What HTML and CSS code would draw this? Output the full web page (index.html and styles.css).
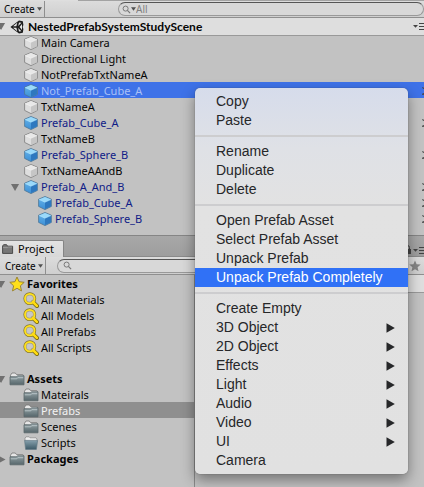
FILE: index.html
```html
<!DOCTYPE html>
<html lang="en">
<head>
<meta charset="utf-8">
<title>Scene editor</title>
<link rel="stylesheet" href="styles.css">
</head>
<body>
<svg class="defs" aria-hidden="true">
  <defs>
    <linearGradient id="gb" x1="0" y1="0" x2="0" y2="1"><stop offset="0" stop-color="#67b4ea"/><stop offset="1" stop-color="#3c8fd6"/></linearGradient>
    <linearGradient id="gf" x1="0" y1="0" x2="0" y2="1"><stop offset="0" stop-color="#93a1a5"/><stop offset="1" stop-color="#56666b"/></linearGradient>
    <linearGradient id="gs" x1="0" y1="0" x2="0" y2="1"><stop offset="0" stop-color="#86a0ac"/><stop offset="1" stop-color="#3d5a68"/></linearGradient>
    <symbol id="cube" viewBox="0 0 14 14">
      <path d="M7 .5 13.4 3.2V10.4L7 13.6.6 10.4V3.2z" fill="#dedede" stroke="#858585" stroke-width=".9"/>
      <path d="M7 1 13 3.4 7 6.2 1 3.4z" fill="#e8e8e8"/>
      <path d="M7 6.2 13 3.5V10.2L7 13.1z" fill="#c6c6c6"/>
      <path d="M1 3.5 7 6.2 13 3.5" fill="none" stroke="#f4f4f4" stroke-width=".6"/>
    </symbol>
    <symbol id="bluecube" viewBox="0 0 14 14">
      <path d="M7 .5 13.4 3.2V10.4L7 13.6.6 10.4V3.2z" fill="url(#gb)" stroke="#4c7594" stroke-width=".8"/>
      <path d="M7 1 13 3.4 7 6.2 1 3.4z" fill="#9ad9fa"/>
      <path d="M7 6.2 13 3.5V10.2L7 13.1z" fill="#2e78bf"/>
      <path d="M1 3.5 7 6.2 13 3.5" fill="none" stroke="#b3e5fc" stroke-width=".6"/>
    </symbol>
    <symbol id="folder" viewBox="0 0 16 14">
      <path d="M1.5 5V3.2L3 1H6.3L7.5 2.6H13.8L14.5 4V6z" fill="#e6e6e6" stroke="#747474" stroke-width=".8"/>
      <path d="M1 4.8H7.4L8.4 3.8H15V12.8H1z" fill="url(#gf)" stroke="#5b676b" stroke-width=".8"/>
      <path d="M1.8 6.8H7.8L8.8 5.7H14.2" fill="none" stroke="#c3cdd0" stroke-width=".8"/>
    </symbol>
    <symbol id="openfolder" viewBox="0 0 16 14">
      <path d="M2 5V2.2L3 .8H6L7 1.8H13L14 3V6z" fill="#eee" stroke="#8d8d8d" stroke-width=".8"/>
      <path d="M1.6 4.4H14.6L13.4 13.4H2.6z" fill="url(#gs)" stroke="#647b86" stroke-width=".7"/>
    </symbol>
    <symbol id="search" viewBox="0 0 16 16">
      <path d="M9.8 9.8 14 14" stroke="#77680f" stroke-width="4" stroke-linecap="round"/>
      <circle cx="6.8" cy="6.6" r="4.8" fill="none" stroke="#86772a" stroke-width="3.2"/>
      <circle cx="6.8" cy="6.6" r="4.8" fill="#ccc" fill-opacity=".5" stroke="#ffe11c" stroke-width="1.8"/>
      <path d="M10 10 13.9 13.9" stroke="#ffdc12" stroke-width="2.6" stroke-linecap="round"/>
    </symbol>
    <symbol id="lens" viewBox="0 0 10 10">
      <circle cx="4" cy="4" r="2.8" fill="none" stroke="#777" stroke-width="1.1"/><path d="M6 6 9 9" stroke="#777" stroke-width="1.4"/>
    </symbol>
    <symbol id="caret" viewBox="0 0 5 4"><path d="M0 .3H5L2.5 3.8z" fill="#505050"/></symbol>
    <symbol id="down" viewBox="0 0 10 10"><path d="M0 1H9L4.5 9z" fill="#707070"/></symbol>
    <symbol id="right" viewBox="0 0 10 10"><path d="M1 .5V9.5L9.5 5z" fill="#707070"/></symbol>
    <symbol id="pane" viewBox="0 0 11 7"><path d="M0 2H5L2.5 4.8z" fill="#444"/><path d="M6 .5H11M6 3.5H11M6 6.5H11" stroke="#444"/></symbol>
    <symbol id="chev" viewBox="0 0 2 10"><path d="M0 1H1L2 2V3H1zM0 8 1 7H2V9H0z" fill="#444" fill-opacity=".8"/></symbol>
    <symbol id="play" viewBox="0 0 9 10"><path d="M.5.3V9.7L8.8 5z" fill="#262729"/></symbol>
  </defs>
</svg>

<main class="editor">
  <section class="hierarchy">
    <div class="strip"></div>
    <div class="toolbar">
      <button class="create">Create<svg class="caret"><use href="#caret"/></svg></button>
      <label class="field field-top"><svg class="lens"><use href="#lens"/></svg><svg class="caret"><use href="#caret"/></svg><input type="text" placeholder="All" aria-label="Search hierarchy"></label>
    </div>
    <header class="scene">
      <svg class="fold"><use href="#down"/></svg>
      <svg class="unity" viewBox="0 0 14 14">
        <path d="M.4 7 9 .6 12.8 1.2 13.4 5 12.6 7 13.4 9 12.8 12.8 9 13.4z" fill="#1c1c1c"/>
        <path d="M3 6.2 7.2 2.8 6.4 6.2zM3 7.8 7.2 11.2 6.4 7.8zM9 2.6 11.4 2.8 8.2 6zM9 11.4 11.4 11.2 8.2 8zM12 4 12 10 9.6 7z" fill="#e6e6e6"/>
      </svg>
      <h1>NestedPrefabSystemStudyScene</h1>
      <svg class="pane"><use href="#pane"/></svg>
    </header>
    <ul class="tree">
      <li class="row"><svg class="cube"><use href="#cube"/></svg>Main Camera</li>
      <li class="row"><svg class="cube"><use href="#cube"/></svg>Directional Light</li>
      <li class="row"><svg class="cube"><use href="#cube"/></svg>NotPrefabTxtNameA</li>
      <li class="row prefab active"><svg class="cube"><use href="#bluecube"/></svg>Not_Prefab_Cube_A<svg class="chev"><use href="#chev"/></svg></li>
      <li class="row"><svg class="cube"><use href="#cube"/></svg>TxtNameA</li>
      <li class="row prefab"><svg class="cube"><use href="#bluecube"/></svg>Prefab_Cube_A<svg class="chev"><use href="#chev"/></svg></li>
      <li class="row"><svg class="cube"><use href="#cube"/></svg>TxtNameB</li>
      <li class="row prefab"><svg class="cube"><use href="#bluecube"/></svg>Prefab_Sphere_B<svg class="chev"><use href="#chev"/></svg></li>
      <li class="row"><svg class="cube"><use href="#cube"/></svg>TxtNameAAndB</li>
      <li class="row prefab parent"><svg class="fold"><use href="#down"/></svg><svg class="cube"><use href="#bluecube"/></svg>Prefab_A_And_B<svg class="chev"><use href="#chev"/></svg></li>
      <li class="row prefab child"><svg class="cube"><use href="#bluecube"/></svg>Prefab_Cube_A<svg class="chev"><use href="#chev"/></svg></li>
      <li class="row prefab child"><svg class="cube"><use href="#bluecube"/></svg>Prefab_Sphere_B<svg class="chev"><use href="#chev"/></svg></li>
    </ul>
  </section>

  <section class="project">
    <div class="tabs">
      <button class="tab"><svg class="tabicon" viewBox="0 0 12 10"><path d="M.6 9.4V2L1.6.7H4.6L5.6 2.2H10.6V9.4z" fill="#777" stroke="#4b4b4b"/><path d="M1 3.6H5.4L6.2 3H10" fill="none" stroke="#aaa" stroke-width=".7"/></svg>Project</button>
      <svg class="lock" viewBox="0 0 7 9"><path d="M1.5 4V2.5a2 2 0 0 1 4 0V4" fill="none" stroke="#444"/><path d="M0 4H7V9H0z" fill="#444"/></svg>
      <svg class="pane"><use href="#pane"/></svg>
    </div>
    <div class="toolbar">
      <button class="create">Create<svg class="caret"><use href="#caret"/></svg></button>
      <label class="field"><svg class="lens"><use href="#lens"/></svg><input type="text" aria-label="Search project"></label>
      <svg class="star" viewBox="0 0 12 12"><path d="M6 .6 7.6 4.3 11.7 4.6 8.6 7.3 9.5 11.3 6 9.2 2.5 11.3 3.4 7.3.3 4.6 4.4 4.3z" fill="#858585"/></svg>
    </div>
    <div class="columns">
      <div class="folders">
        <ul class="tree">
          <li class="row top"><svg class="fold"><use href="#down"/></svg><svg class="icon" viewBox="0 0 16 16"><path d="M8 1 10.1 5.7 15.2 6.3 11.4 9.8 12.5 14.9 8 12.3 3.5 14.9 4.6 9.8.8 6.3 5.9 5.7z" fill="#ffe01a" stroke="#9a8434" stroke-linejoin="round"/></svg>Favorites</li>
          <li class="row"><svg class="icon"><use href="#search"/></svg>All Materials</li>
          <li class="row"><svg class="icon"><use href="#search"/></svg>All Models</li>
          <li class="row"><svg class="icon"><use href="#search"/></svg>All Prefabs</li>
          <li class="row"><svg class="icon"><use href="#search"/></svg>All Scripts</li>
        </ul>
        <ul class="tree">
          <li class="row top"><svg class="fold"><use href="#down"/></svg><svg class="folder"><use href="#folder"/></svg>Assets</li>
          <li class="row"><svg class="folder"><use href="#folder"/></svg>Mateirals</li>
          <li class="row chosen"><svg class="folder"><use href="#folder"/></svg>Prefabs</li>
          <li class="row"><svg class="folder"><use href="#folder"/></svg>Scenes</li>
          <li class="row"><svg class="folder"><use href="#openfolder"/></svg>Scripts</li>
          <li class="row top"><svg class="fold"><use href="#right"/></svg><svg class="folder"><use href="#folder"/></svg>Packages</li>
        </ul>
      </div>
      <div class="files"><div class="path"></div></div>
    </div>
  </section>

  <nav class="menu">
    <button>Copy</button>
    <button>Paste</button>
    <hr>
    <button>Rename</button>
    <button>Duplicate</button>
    <button>Delete</button>
    <hr>
    <button>Open Prefab Asset</button>
    <button>Select Prefab Asset</button>
    <button>Unpack Prefab</button>
    <button class="hot">Unpack Prefab Completely</button>
    <hr>
    <button>Create Empty</button>
    <button>3D Object<svg><use href="#play"/></svg></button>
    <button>2D Object<svg><use href="#play"/></svg></button>
    <button>Effects<svg><use href="#play"/></svg></button>
    <button>Light<svg><use href="#play"/></svg></button>
    <button>Audio<svg><use href="#play"/></svg></button>
    <button>Video<svg><use href="#play"/></svg></button>
    <button>UI<svg><use href="#play"/></svg></button>
    <button>Camera</button>
  </nav>
</main>
</body>
</html>
```
FILE: styles.css
```css
* { box-sizing: border-box; }
body {
  margin: 0;
  background: #c2c2c2;
  color: #050505;
  font: 11px/16px "Noto Sans", "Open Sans", sans-serif;
}
.defs { position: absolute; width: 0; height: 0; }
svg { flex: none; display: block; }
button { font: inherit; color: inherit; background: none; border: 0; margin: 0; padding: 0; text-align: left; }
ul { list-style: none; margin: 0; padding: 0; }

.editor { position: relative; display: flex; flex-direction: column; min-height: 100vh; overflow: hidden; }
.hierarchy { border-bottom: 1px solid #858585; padding-bottom: 9px; }
.strip { height: 1px; background: linear-gradient(90deg, #dedede 78px, #a3a3a3 78px); }

.toolbar {
  display: flex;
  align-items: center;
  height: 17px;
  background: linear-gradient(#dcdcdc, #cfcfcf);
  border-bottom: 1px solid #8f8f8f;
}
.create {
  display: flex;
  align-items: center;
  gap: 2px;
  width: 45px;
  height: 100%;
  padding-left: 4px;
  border-right: 1px solid #8f8f8f;
  font-size: 10px;
}
.caret { width: 5px; height: 4px; }
.field {
  display: flex;
  align-items: center;
  flex: 1;
  min-width: 0;
  height: 14px;
  margin-left: 11px;
  padding-left: 5px;
  border: 1px solid #999;
  border-top-color: #555;
  border-radius: 7px;
  background: #d8d8d8;
}
.field-top { margin-left: 73px; padding-left: 3px; }
.field input { flex: 1; min-width: 0; padding: 0; border: 0; outline: 0; background: none; font: inherit; font-size: 10px; line-height: 12px; }
.field input::placeholder { color: #808080; opacity: 1; }
.lens { width: 9px; height: 9px; }

.scene { display: flex; align-items: center; height: 18px; background: #dedede; border-bottom: 1px solid #999; margin-bottom: -2px; }
.scene h1 { flex: 1; margin: 0 0 0 4px; font: bold 12px/16px Lato, sans-serif; }
.fold { width: 9px; height: 9px; }
.scene .fold, .top .fold { margin-left: -3px; }
.unity { width: 14px; height: 14px; margin-left: 4px; }
.pane { width: 11px; height: 7px; }

.row { display: flex; align-items: center; height: 16px; padding-top: 2px; padding-left: 24px; }
.row.parent { padding-left: 11px; }
.row.parent .cube { margin-left: 4px; }
.row.child { padding-left: 38px; }
.cube { width: 14px; height: 14px; margin-right: 3px; }
.prefab { color: #101c87; }
.active { background: #3e72e8; color: #a9c0f7; }
.chev { width: 2px; height: 10px; margin-left: auto; }

.tabs { display: flex; align-items: flex-end; height: 21px; padding-top: 4px; background: linear-gradient(#a8a8a8, #9e9e9e); border-bottom: 1px solid #8a8a8a; }
.tab { display: flex; align-items: center; gap: 4px; width: 64px; height: 17px; margin-right: auto; padding-left: 2px; margin-bottom: -1px; background: linear-gradient(#e3e3e3, #d8d8d8); border: solid #858585; border-width: 1px 1px 0 0; border-radius: 0 2px 0 0; }
.tabicon { width: 12px; height: 10px; }
.lock { width: 7px; height: 9px; margin: 0 2px 2px 0; }
.tabs .pane { margin-bottom: 2px; }
.project .toolbar { height: 18px; }
.project .create { width: 46px; padding-left: 5px; }
.star { width: 12px; height: 12px; margin: 0 3px; }

.project { display: flex; flex-direction: column; flex: 1; }
.columns { display: flex; flex: 1; }
.folders { width: 195px; border-right: 1px solid #8a8a8a; }
.folders .row { padding-left: 23px; }
.folders .row.top { padding-left: 0; font-weight: bold; }
.folders .tree + .tree { margin-top: 15px; }
.icon { width: 16px; height: 16px; margin-right: 2px; }
.folder { width: 16px; height: 14px; margin-right: 2px; }
.top .icon, .top .folder { margin-left: 3px; }
.chosen { background: #8f8f8f; color: #f2f2f2; }
.files { flex: 1; }
.path { height: 18px; background: #dedede; border-bottom: 1px solid #999; }

.menu {
  position: absolute;
  left: 195px;
  top: 88px;
  width: 213px;
  padding: 4px 0;
  background: linear-gradient(#d6dceb, #dfe1e6 60px, #e2e2e2 120px, #e1e1e1);
  border-radius: 5px;
  box-shadow: 0 0 1px #444, 0 6px 14px rgba(0, 0, 0, .4);
  color: #262729;
  font: 14px/19px "Liberation Sans", Arial, sans-serif;
}
.menu button { display: flex; align-items: center; justify-content: space-between; width: 100%; height: 19px; padding: 0 13px 0 21px; }
.menu .hot { background: #3071f6; color: #fff; }
.menu hr { height: 2px; margin: 5px 0; border: 0; background: #cdcdcf; }
.menu svg { width: 9px; height: 10px; }
```
